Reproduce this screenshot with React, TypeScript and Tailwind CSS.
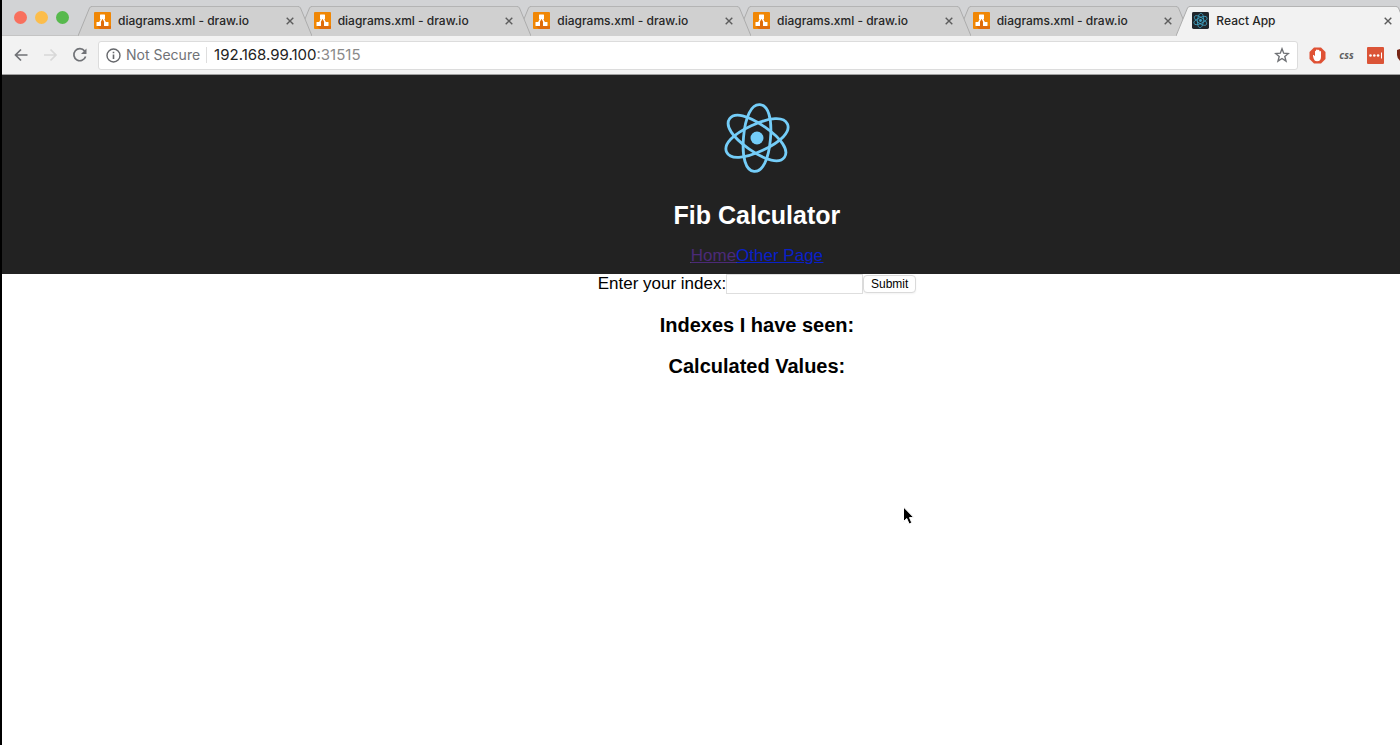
import React from "react";

const diagramTabs = [
  { id: 1, layer: "z-[5]" },
  { id: 2, layer: "z-[4]" },
  { id: 3, layer: "z-[3]" },
  { id: 4, layer: "z-[2]" },
  { id: 5, layer: "z-[1]" },
];

function DrawIoIcon() {
  return (
    <svg className="size-[17px] shrink-0" viewBox="0 0 17 17" aria-hidden="true">
      <rect width="17" height="17" rx="1" fill="#f08705" />
      <path d="M10 6 15 14 17 14V16q0 1-1 1H6L3 14Z" fill="#df6c0c" />
      <path d="M8.500 5 5 12M8.500 5l3.500 7" stroke="#fff" strokeWidth="1.600" />
      <rect x="6" y="2.500" width="5" height="4.500" rx=".5" fill="#fff" />
      <rect x="2.500" y="10" width="4.500" height="4" rx=".5" fill="#fff" />
      <rect x="10" y="10" width="4.500" height="4" rx=".5" fill="#fff" />
    </svg>
  );
}

const orbit =
  "M-33.500 0C-33.500-8.500-20.500-13.500 0-13.500S33.500-8.500 33.500 0 20.500 13.500 0 13.500-33.500 8.500-33.500 0Z";

function Atom({ stroke }: { stroke: number }) {
  return (
    <>
      <g fill="none" stroke="currentColor" strokeWidth={stroke}>
        <path d={orbit} transform="rotate(-25)" />
        <path d={orbit} transform="rotate(35)" />
        <path d={orbit} transform="rotate(95)" />
      </g>
      <circle r="6.500" fill="currentColor" />
    </>
  );
}

function ReactIcon() {
  return (
    <svg className="size-[17px] shrink-0 text-[#3fa3c4]" viewBox="-40 -40 80 80" aria-hidden="true">
      <rect x="-40" y="-40" width="80" height="80" rx="7" fill="#20262b" />
      <Atom stroke={4} />
    </svg>
  );
}

function Tab({
  title,
  layer,
  active = false,
  icon,
}: {
  title: string;
  layer: string;
  active?: boolean;
  icon: React.ReactNode;
}) {
  const tone = active ? "text-[#f2f2f2]" : "text-[#d0d0d0]";
  return (
    <div className={"-mr-[14px] flex h-[30px] min-w-0 flex-1 " + layer}>
      <svg className={"h-[30px] w-[14px] shrink-0 " + tone} viewBox="0 0 14 30" aria-hidden="true">
        <path d="M0 30 11.500 2Q12.300 .5 14 .5V30Z" fill="currentColor" />
        <path d="M0 30 11.500 2Q12.300 .5 14 .5" fill="none" stroke="#acacac" />
      </svg>
      <div
        className={
          "flex min-w-0 flex-1 items-center border-t border-[#b4b4b4] pb-[2px] pl-[2px] pr-[2px] " +
          (active ? "bg-[#f2f2f2]" : "bg-[#d0d0d0]")
        }
      >
        {icon}
        <span className="ml-[7px] flex-1 truncate text-[12px] font-medium leading-4 text-[#262626]">{title}</span>
        <button type="button" aria-label="Close tab" className="flex size-3 items-center justify-center">
          <svg className="size-2" viewBox="0 0 8 8" aria-hidden="true">
            <path d="M.7.700l6.600 6.600M7.300.700.700 7.300" stroke="#5c5c5c" strokeWidth="1.400" />
          </svg>
        </button>
      </div>
      <svg className={"h-[30px] w-[14px] shrink-0 " + tone} viewBox="0 0 14 30" aria-hidden="true">
        <path d="M0 .5Q1.700.500 2.500 2L14 30H0Z" fill="currentColor" />
        <path d="M0 .5Q1.700.500 2.500 2L14 30" fill="none" stroke="#acacac" />
      </svg>
    </div>
  );
}

function TabStrip() {
  return (
    <div className="flex h-9 items-start border-b border-[#c4c4c4] bg-[#d2d3d5]">
      <div className="flex w-[76px] shrink-0 gap-2 pl-3 pt-[11px]">
        <button type="button" aria-label="Close window" className="size-[13px] rounded-full bg-[#f8705e]" />
        <button type="button" aria-label="Minimize window" className="size-[13px] rounded-full bg-[#fcbd4b]" />
        <button type="button" aria-label="Zoom window" className="size-[13px] rounded-full bg-[#57b94d]" />
      </div>
      <div className="mr-1 flex min-w-0 flex-1 pt-[6px]">
        {diagramTabs.map((tab) => (
          <Tab key={tab.id} title="diagrams.xml - draw.io" layer={tab.layer} icon={<DrawIoIcon />} />
        ))}
        <Tab title="React App" layer="z-10" icon={<ReactIcon />} active />
      </div>
    </div>
  );
}

function Toolbar() {
  return (
    <div className="flex h-[39px] items-center border-b border-[#a0a0a0] bg-[#f2f2f2] pl-[11px]">
      <button type="button" aria-label="Back">
        <svg className="h-4 w-[17px]" viewBox="0 0 17 16" fill="none" stroke="#707276" strokeWidth="1.700" aria-hidden="true">
          <path d="M8 2.500 2.500 8l5.500 5.500M2.500 8H14.500" />
        </svg>
      </button>
      <button type="button" aria-label="Forward" className="ml-3">
        <svg className="h-4 w-[17px]" viewBox="0 0 17 16" fill="none" stroke="#d8d8d8" strokeWidth="1.700" aria-hidden="true">
          <path d="M8.500 2.500l5.500 5.500-5.500 5.500M14 8H2" />
        </svg>
      </button>
      <button type="button" aria-label="Reload" className="ml-3">
        <svg className="size-[18px]" viewBox="0 0 18 18" aria-hidden="true">
          <path d="M13.600 5A6 6 0 1 0 14.600 10.500" fill="none" stroke="#707276" strokeWidth="1.700" />
          <path d="M15.500 2.500v5.500h-5.500Z" fill="#707276" />
        </svg>
      </button>
      <div className="ml-[9px] flex h-[29px] min-w-0 flex-1 items-center rounded-[3px] border border-[#dcdcdc] bg-white px-[7px] leading-5">
        <svg className="size-[15px] shrink-0" viewBox="0 0 15 15" aria-hidden="true">
          <circle cx="7.500" cy="7.500" r="6.500" fill="none" stroke="#66686c" strokeWidth="1.400" />
          <path d="M7.500 6.500V11M7.500 3.700V5.300" stroke="#66686c" strokeWidth="1.600" />
        </svg>
        <span className="ml-[5px] text-[14px] text-[#707276]">Not Secure</span>
        <span className="ml-[6px] h-4 w-px bg-[#dedede]" />
        <span className="ml-[7px] flex-1 text-[15px] text-[#8a8a8a]">
          <span className="text-[#222]">192.168.99.100</span>:31515
        </span>
        <button type="button" aria-label="Bookmark this page">
          <svg className="size-4" viewBox="0 0 16 16" fill="none" stroke="#707276" strokeWidth="1.400" aria-hidden="true">
            <path d="m8 1.800 1.700 4.400 4.700.300-3.600 3 1.200 4.600L8 11.500l-4 2.600 1.200-4.600-3.600-3 4.700-.300Z" />
          </svg>
        </button>
      </div>
      <button type="button" aria-label="Ad blocker" className="ml-[11px] shrink-0">
        <svg className="size-[17px]" viewBox="0 0 17 17" aria-hidden="true">
          <path d="M5 .5h7L16.500 5v7L12 16.500H5L.5 12V5Z" fill="#df5134" />
          <path
            d="M4 9q-.300-1.200.8-1l1.200 1.300V4.500q0-.800.800-.8l.2 0V3.300q0-.800.900-.8t.9.800q0-.600.800-.6t.8.800v1q.1-.500.800-.500t.8.800V10q0 4.200-4 4.200-2.600 0-3.300-2.500Z"
            fill="#fff"
          />
        </svg>
      </button>
      <button type="button" className="ml-3 w-[17px] shrink-0 font-['Noto_Sans',sans-serif] text-[10px] font-bold italic leading-4 text-[#606060]">
        css
      </button>
      <button type="button" aria-label="Password manager" className="ml-3 shrink-0">
        <svg className="size-[17px]" viewBox="0 0 17 17" aria-hidden="true">
          <rect width="17" height="17" rx="1" fill="#db5437" />
          <circle cx="3.500" cy="8.500" r="1.300" fill="#fff" />
          <circle cx="7.300" cy="8.500" r="1.300" fill="#fff" />
          <circle cx="11.100" cy="8.500" r="1.300" fill="#fff" />
          <path d="M14.500 5.500v6" stroke="#fff" />
        </svg>
      </button>
      <button type="button" aria-label="Shield extension" className="ml-3 w-1 shrink-0 overflow-hidden">
        <svg className="h-4 w-[15px]" viewBox="0 0 15 16" aria-hidden="true">
          <path d="M7.500 1 14 3v5q0 5-6.500 7.500Q1 13 1 8V3Z" fill="#762514" />
        </svg>
      </button>
    </div>
  );
}

function FibPage() {
  return (
    <div className="w-[108%] text-center font-['Liberation_Sans',Arial,sans-serif] text-[17px] text-black">
      <header className="flex flex-col items-center bg-[#222] pb-2 pt-[23px] text-white">
        <svg className="size-20 text-[#74cdf8]" viewBox="-40 -40 80 80" role="img" aria-label="logo">
          <Atom stroke={2.8} />
        </svg>
        <h1 className="mt-[22px] text-[25px] font-bold leading-[30px]">Fib Calculator</h1>
        <nav className="mt-4 flex leading-5 underline">
          <a href="#home" className="text-[#4b2a78]">Home</a>
          <a href="#other" className="text-[#0a20c8]">Other Page</a>
        </nav>
      </header>
      <main>
        <form className="flex items-start justify-center" onSubmit={(e) => e.preventDefault()}>
          <label htmlFor="index" className="leading-5">Enter your index:</label>
          <input id="index" className="h-5 w-[137px] border border-[#dedede] bg-white px-1 text-[12px] outline-none" />
          <button
            type="submit"
            className="mt-px h-[18px] w-[53px] rounded-[4px] border border-[#dadada] bg-white text-[12px] leading-4 shadow-xs"
          >
            Submit
          </button>
        </form>
        <h3 className="mt-[19px] text-[20px] font-bold leading-6">Indexes I have seen:</h3>
        <h3 className="mt-[17px] text-[20px] font-bold leading-6">Calculated Values:</h3>
      </main>
    </div>
  );
}

export default function App() {
  return (
    <div className="relative min-h-screen overflow-hidden border-l-2 border-black bg-white font-[Inter,Roboto,sans-serif]">
      <TabStrip />
      <Toolbar />
      <FibPage />
      <svg className="pointer-events-none absolute left-[900px] top-[506px] h-5 w-[14px]" viewBox="0 0 14 20" aria-hidden="true">
        <path d="M1.500 1v14.500l3.300-3 2.300 5.500 2.700-1.200-2.300-5.200h4.300Z" fill="#000" stroke="#fff" strokeWidth="1" />
      </svg>
    </div>
  );
}
